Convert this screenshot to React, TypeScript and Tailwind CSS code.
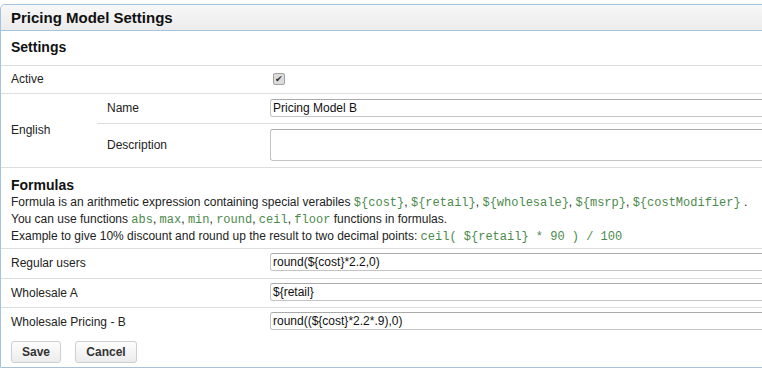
import React from "react";

const Code = ({ children }: { children: React.ReactNode }) => (
  <code className="font-['Liberation_Mono',monospace] text-[12px] text-[#4c8a4c]">
    {children}
  </code>
);

const TextInput = ({ value, tall }: { value?: string; tall?: boolean }) => (
  <div
    className={`w-[560px] rounded-[3px] border border-[#c4c4c4] border-t-[#aaa] bg-white pl-[2px] text-[12px] leading-[16px] text-[#111] ${
      tall ? "h-[32px]" : "h-[18px]"
    }`}
  >
    {value}
  </div>
);

const PricingModelSettings = () => {
  return (
    <div className="w-[762px] h-[369px] overflow-hidden bg-white font-['Liberation_Sans',Arial,sans-serif] text-[12px] text-[#222]">
      <div className="mt-[4px] w-[840px] rounded-tl-[5px] border border-[#a6c3dd]">
        <div className="h-[26px] rounded-tl-[5px] border-b border-[#a6c3dd] bg-gradient-to-b from-[#f7f7f7] to-[#ececec] pl-[10px] text-[15px] font-bold leading-[26px] text-[#111]">
          Pricing Model Settings
        </div>

        <table className="w-full border-collapse">
          <tbody>
            <tr className="h-[34px] border-b border-[#ddd]">
              <td colSpan={3} className="pl-[10px] text-[14px] font-bold text-[#111]">
                Settings
              </td>
            </tr>
            <tr className="h-[28px] border-b border-[#ddd]">
              <td colSpan={2} className="pl-[10px]">
                Active
              </td>
              <td className="pl-[8px]">
                <span className="flex h-[12px] w-[12px] items-center justify-center rounded-[2px] border border-[#a0a0a0] bg-[#dcdcdc] text-[9px] leading-none text-[#333]">
                  ✔
                </span>
              </td>
            </tr>
            <tr className="h-[30px]">
              <td rowSpan={2} className="w-[96px] border-b border-[#ddd] pl-[10px]">
                English
              </td>
              <td className="w-[168px] border-b border-[#ddd] pl-[10px]">Name</td>
              <td className="border-b border-[#ddd] pl-[5px]">
                <TextInput value="Pricing Model B" />
              </td>
            </tr>
            <tr className="h-[44px] border-b border-[#ddd]">
              <td className="pl-[10px]">Description</td>
              <td className="pl-[5px]">
                <TextInput tall />
              </td>
            </tr>
          </tbody>
        </table>

        <div className="h-[81px] border-b border-[#ddd] pl-[10px] pt-[8px]">
          <div className="text-[14px] font-bold leading-[18px] text-[#111]">Formulas</div>
          <p className="leading-[16px]">
            Formula is an arithmetic expression containing special verabiles{" "}
            <Code>{"${cost}"}</Code>, <Code>{"${retail}"}</Code>,{" "}
            <Code>{"${wholesale}"}</Code>, <Code>{"${msrp}"}</Code>,{" "}
            <Code>{"${costModifier}"}</Code> .
          </p>
          <p className="leading-[16px]">
            You can use functions <Code>abs</Code>, <Code>max</Code>, <Code>min</Code>,{" "}
            <Code>round</Code>, <Code>ceil</Code>, <Code>floor</Code> functions in formulas.
          </p>
          <p className="leading-[16px]">
            Example to give 10% discount and round up the result to two decimal points:{" "}
            <Code>{"ceil( ${retail} * 90 ) / 100"}</Code>
          </p>
        </div>

        <table className="w-full border-collapse">
          <tbody>
            <tr className="h-[30px] border-b border-[#ddd]">
              <td className="w-[264px] pl-[10px]">Regular users</td>
              <td className="pl-[5px] pb-[3px]">
                <TextInput value="round(${cost}*2.2,0)" />
              </td>
            </tr>
            <tr className="h-[29px] border-b border-[#ddd]">
              <td className="pl-[10px]">Wholesale A</td>
              <td className="pl-[5px] pb-[3px]">
                <TextInput value="${retail}" />
              </td>
            </tr>
            <tr className="h-[29px]">
              <td className="pl-[10px]">Wholesale Pricing - B</td>
              <td className="pl-[5px] pb-[3px]">
                <TextInput value="round((${cost}*2.2*.9),0)" />
              </td>
            </tr>
          </tbody>
        </table>

        <div className="flex gap-[14px] pl-[10px] pt-[4px] pb-[4px]">
          <button
            type="button"
            className="h-[22px] w-[50px] rounded-[3px] border border-[#cfcfcf] bg-gradient-to-b from-[#fdfdfd] to-[#ececec] text-[12px] font-bold text-[#333]"
          >
            Save
          </button>
          <button
            type="button"
            className="h-[22px] w-[62px] rounded-[3px] border border-[#cfcfcf] bg-gradient-to-b from-[#fdfdfd] to-[#ececec] text-[12px] font-bold text-[#333]"
          >
            Cancel
          </button>
        </div>
      </div>
    </div>
  );
};

export default PricingModelSettings;
